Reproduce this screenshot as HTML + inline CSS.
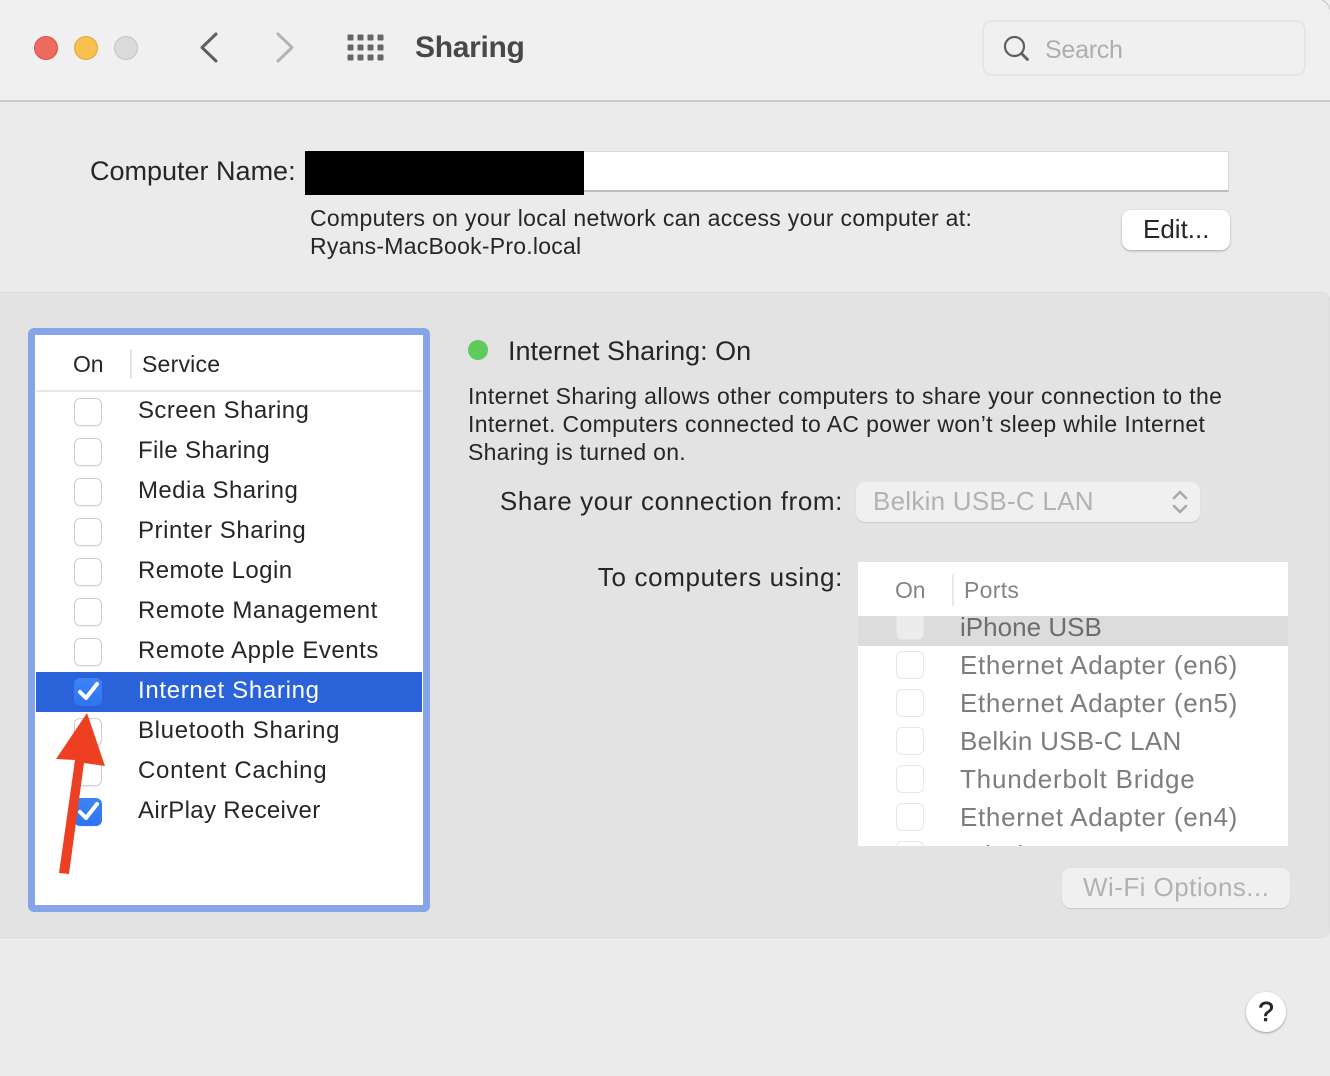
<!DOCTYPE html>
<html><head><meta charset="utf-8"><style>
html,body{margin:0;padding:0;background:#ebebeb}
#w{position:relative;width:1330px;height:1076px;overflow:hidden;background:#ebebeb;font-family:"Liberation Sans",sans-serif;color:#262626}
#w div{position:absolute;box-sizing:border-box}
.t{white-space:nowrap;line-height:30px;height:30px}
.cb{width:28px;height:28px;border-radius:6px;background:#fff;border:1px solid #cfcfcf;box-shadow:0 1px 1px rgba(0,0,0,.05)}
.on{background:linear-gradient(#3d84f7,#2f74f0);border:0}
.pc{width:28px;height:28px;border-radius:6px;background:#fff;border:1px solid #e7e7e7;left:38px}
.s{left:138px;font-size:24px;letter-spacing:.42px}
.p{left:102px;font-size:26px;letter-spacing:.68px;color:#7d7d7d}
</style></head><body><div id="w">
<div style="left:0;top:0;width:1330px;height:102px;background:#f0f0f0;border-bottom:2px solid #cbcbcb"></div>
<div style="left:34px;top:36px;width:24px;height:24px;border-radius:50%;background:#ee6a5f;border:1px solid #d9534a"></div>
<div style="left:74px;top:36px;width:24px;height:24px;border-radius:50%;background:#f6c14f;border:1px solid #dfa63a"></div>
<div style="left:114px;top:36px;width:24px;height:24px;border-radius:50%;background:#dbdbdb;border:1px solid #c4c4c4"></div>
<svg style="position:absolute;left:0;top:0" width="1330" height="101">
<path d="M216 34L202 47.500 216 61" fill="none" stroke="#5f5f5f" stroke-width="3" stroke-linecap="round" stroke-linejoin="round"/>
<path d="M278 34l14 13.500-14 13.500" fill="none" stroke="#b4b4b4" stroke-width="3" stroke-linecap="round" stroke-linejoin="round"/>
<g fill="#666"><rect x="347.500" y="34.500" width="6" height="6" rx="1"/><rect x="357.500" y="34.500" width="6" height="6" rx="1"/><rect x="367.500" y="34.500" width="6" height="6" rx="1"/><rect x="377.500" y="34.500" width="6" height="6" rx="1"/><rect x="347.500" y="44.500" width="6" height="6" rx="1"/><rect x="357.500" y="44.500" width="6" height="6" rx="1"/><rect x="367.500" y="44.500" width="6" height="6" rx="1"/><rect x="377.500" y="44.500" width="6" height="6" rx="1"/><rect x="347.500" y="54.500" width="6" height="6" rx="1"/><rect x="357.500" y="54.500" width="6" height="6" rx="1"/><rect x="367.500" y="54.500" width="6" height="6" rx="1"/><rect x="377.500" y="54.500" width="6" height="6" rx="1"/></g>
<circle cx="1014.500" cy="46.500" r="9.500" fill="none" stroke="#5f5f5f" stroke-width="2.200"/><path d="M1021.500 53.500l6 6" stroke="#5f5f5f" stroke-width="2.800" stroke-linecap="round"/>
<path d="M1322 0a14 14 0 0 1 8 10" fill="none" stroke="#c4c4c4" stroke-width="1"/>
</svg>
<div class="t" style="left:415px;top:33px;font-size:30px;font-weight:bold;color:#484848;letter-spacing:-.3px">Sharing</div>
<div style="left:982px;top:20px;width:324px;height:56px;border:2px solid #e6e6e6;border-radius:10px"></div>
<div class="t" style="left:1045px;top:35px;font-size:25px;color:#aeaeae;letter-spacing:-.25px">Search</div>

<div class="t" style="left:90px;top:156px;font-size:27px;letter-spacing:0">Computer Name:</div>
<div style="left:305px;top:151px;width:924px;height:41px;background:#fff;border:1px solid #d6d6d6;border-bottom:2px solid #bdbdbd"></div>
<div style="left:305px;top:151px;width:279px;height:44px;background:#000"></div>
<div class="t" style="left:310px;top:203px;font-size:23px;letter-spacing:.32px">Computers on your local network can access your computer at:</div>
<div class="t" style="left:310px;top:231px;font-size:23px;letter-spacing:.24px">Ryans-MacBook-Pro.local</div>
<div style="left:1122px;top:210px;width:108px;height:40px;background:#fff;border-radius:9px;box-shadow:0 1px 2px rgba(0,0,0,.3)"></div>
<div class="t" style="left:1143px;top:214px;font-size:26px">Edit...</div>

<div style="left:-8px;top:292px;width:1338px;height:646px;background:#e3e3e3;border:1px solid #dcdcdc;border-radius:8px"></div>

<div style="left:28px;top:328px;width:402px;height:584px;background:#fff;border:7px solid #86a5e8;border-radius:6px"></div>
<div class="t" style="left:73px;top:349px;font-size:23px;letter-spacing:-.1px">On</div>
<div style="left:130px;top:349px;width:2px;height:30px;background:#e3e3e3"></div>
<div class="t" style="left:142px;top:349px;font-size:23px;letter-spacing:.22px">Service</div>
<div style="left:36px;top:390px;width:386px;height:2px;background:#e6e6e6"></div>
<div style="left:36px;top:672px;width:386px;height:40px;background:#2a62d9"></div>

<div class="cb" style="left:74px;top:398px"></div><div class="t s" style="top:396px">Screen Sharing</div>
<div class="cb" style="left:74px;top:438px"></div><div class="t s" style="top:436px;letter-spacing:.33px">File Sharing</div>
<div class="cb" style="left:74px;top:478px"></div><div class="t s" style="top:476px">Media Sharing</div>
<div class="cb" style="left:74px;top:518px"></div><div class="t s" style="top:516px;letter-spacing:.55px">Printer Sharing</div>
<div class="cb" style="left:74px;top:558px"></div><div class="t s" style="top:556px">Remote Login</div>
<div class="cb" style="left:74px;top:598px"></div><div class="t s" style="top:596px;letter-spacing:.53px">Remote Management</div>
<div class="cb" style="left:74px;top:638px"></div><div class="t s" style="top:636px;letter-spacing:.53px">Remote Apple Events</div>
<div class="cb on" style="left:74px;top:678px"></div><div class="t s" style="top:676px;color:#fff;letter-spacing:.68px">Internet Sharing</div>
<div class="cb" style="left:74px;top:718px"></div><div class="t s" style="top:716px;letter-spacing:.67px">Bluetooth Sharing</div>
<div class="cb" style="left:74px;top:758px"></div><div class="t s" style="top:756px;letter-spacing:.7px">Content Caching</div>
<div class="cb on" style="left:74px;top:798px"></div><div class="t s" style="top:796px;letter-spacing:.32px">AirPlay Receiver</div>
<svg style="position:absolute;left:0;top:0" width="430" height="912">
<path d="M80 692l6 6 11-14M80 812l6 6 11-14" fill="none" stroke="#fff" stroke-width="4" stroke-linecap="round" stroke-linejoin="round"/>
<path d="M87 713L105 766 84 763 69 874 59 873 75 760 56 759Z" fill="#ed4023"/>
</svg>

<div style="left:468px;top:340px;width:20px;height:20px;border-radius:50%;background:#5ecb5a"></div>
<div class="t" style="left:508px;top:336px;font-size:27px;letter-spacing:0">Internet Sharing: On</div>
<div class="t" style="left:468px;top:381px;font-size:23px;letter-spacing:.36px">Internet Sharing allows other computers to share your connection to the</div>
<div class="t" style="left:468px;top:409px;font-size:23px;letter-spacing:.37px">Internet. Computers connected to AC power won’t sleep while Internet</div>
<div class="t" style="left:468px;top:437px;font-size:23px;letter-spacing:.27px">Sharing is turned on.</div>
<div class="t" style="right:487px;top:486px;font-size:26px;letter-spacing:.61px">Share your connection from:</div>
<div style="left:856px;top:482px;width:344px;height:40px;background:#f0f0f0;border-radius:9px;box-shadow:0 1px 1px rgba(0,0,0,.12)"></div>
<div class="t" style="left:873px;top:486px;font-size:26px;color:#b2b2b2;letter-spacing:.25px">Belkin USB-C LAN</div>
<svg style="position:absolute;left:1170px;top:488px" width="20" height="28"><path d="M4 10l6-6 6 6M4 18l6 6 6-6" fill="none" stroke="#a8a8a8" stroke-width="2.500" stroke-linecap="round" stroke-linejoin="round"/></svg>
<div class="t" style="right:487px;top:562px;font-size:26px;letter-spacing:.66px">To computers using:</div>

<div style="left:858px;top:562px;width:430px;height:284px;background:#fff;overflow:hidden">
<div class="t" style="left:37px;top:13px;font-size:23px;letter-spacing:-.1px;color:#848484">On</div>
<div style="left:94px;top:12px;width:2px;height:32px;background:#e8e8e8"></div>
<div class="t" style="left:106px;top:13px;font-size:23px;letter-spacing:.3px;color:#848484">Ports</div>
<div style="left:0;top:54px;width:430px;height:30px;background:#dcdcdc;overflow:hidden">
<div class="pc" style="top:-4px;background:#ececec;border-color:#e4e4e4"></div>
<div class="t p" style="top:-4px;color:#6d6d6d;letter-spacing:.02px">iPhone USB</div></div>
<div class="pc" style="top:89px"></div><div class="t p" style="top:88px">Ethernet Adapter (en6)</div>
<div class="pc" style="top:127px"></div><div class="t p" style="top:126px">Ethernet Adapter (en5)</div>
<div class="pc" style="top:165px"></div><div class="t p" style="top:164px;letter-spacing:.3px">Belkin USB-C LAN</div>
<div class="pc" style="top:203px"></div><div class="t p" style="top:202px;letter-spacing:.8px">Thunderbolt Bridge</div>
<div class="pc" style="top:241px"></div><div class="t p" style="top:240px">Ethernet Adapter (en4)</div>
<div class="pc" style="top:279px"></div><div class="t p" style="top:278px">Wi-Fi</div>
</div>
<div style="left:1062px;top:868px;width:228px;height:40px;background:#f0f0f0;border-radius:9px;box-shadow:0 1px 1px rgba(0,0,0,.12)"></div>
<div class="t" style="left:1083px;top:872px;font-size:26px;color:#b2b2b2;letter-spacing:.45px">Wi-Fi Options...</div>

<div style="left:1246px;top:992px;width:40px;height:40px;border-radius:50%;background:#fff;box-shadow:0 1px 2px rgba(0,0,0,.35)"></div>
<div class="t" style="left:1246px;top:997px;width:40px;text-align:center;font-size:28px;-webkit-text-stroke:.6px #262626">?</div>
</div></body></html>
